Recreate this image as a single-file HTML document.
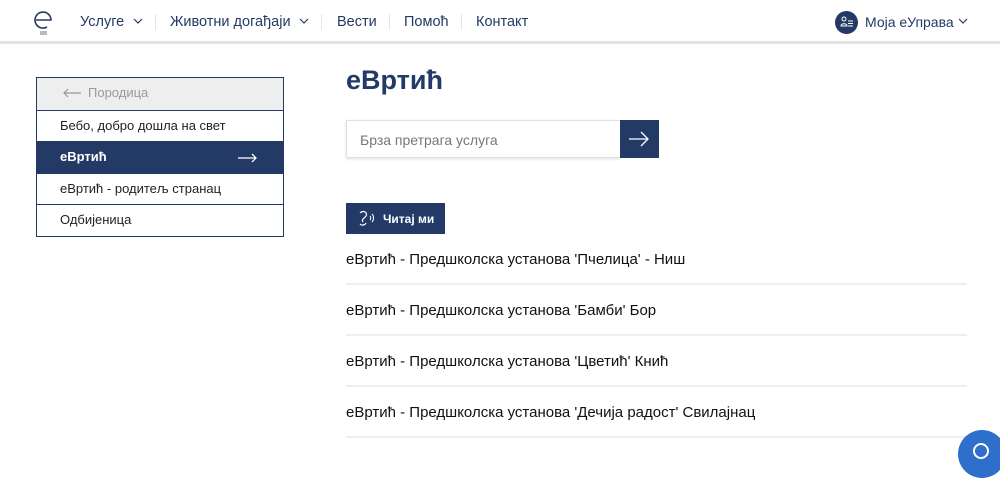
<!DOCTYPE html>
<html><head><meta charset="utf-8"><style>
*{margin:0;padding:0;box-sizing:border-box}
body{width:1000px;height:455px;overflow:hidden;background:#fff;font-family:"Liberation Sans",sans-serif;color:#222;position:relative}
.hdr{position:absolute;left:0;top:0;width:1000px;height:44px;background:#fff;border-bottom:3px solid #e2e2e2}
.nav{position:absolute;top:14px;font-size:14.5px;color:#243a66}
.sep{position:absolute;top:14px;width:1px;height:16px;background:#e6e6e6}
.chev{position:absolute;top:17px}
.side{position:absolute;left:36px;top:77px;width:248px;border:1px solid #243a66}
.side div{height:31.6px;line-height:30px;padding-left:23px;font-size:13px;border-top:1px solid #243a66;position:relative}
.side div:first-child{border-top:none;background:#eee;color:#999}
.side .act{background:#243a66;color:#fff;font-weight:bold}
h1{position:absolute;left:346px;top:65px;font-size:27px;color:#243a66;font-weight:bold}
.search{position:absolute;left:346px;top:120px;width:275px;height:38px;border:1px solid #e0e0e0;box-shadow:0 1px 3px rgba(0,0,0,.12);font-size:14px;color:#777;padding:11px 0 0 13px}
.sbtn{position:absolute;left:620px;top:120px;width:39px;height:38px;background:#243a66}
.read{position:absolute;left:346px;top:203px;width:99px;height:31px;background:#243a66;color:#fff;font-size:12px;font-weight:bold;padding:9px 0 0 37px}
.item{position:absolute;left:346px;width:621px;font-size:15px;color:#111;border-bottom:2px solid #eee;padding-top:3px}
</style></head><body>
<div class="hdr">
<svg style="position:absolute;left:34px;top:11px" width="20" height="26" viewBox="0 0 20 26"><path d="M2 9 H17 A8 8 0 1 0 13 16" fill="none" stroke="#243a66" stroke-width="1.6"/><path d="M6 21h7M6 23h7" stroke="#777" stroke-width="1"/></svg>
<span class="nav" style="left:80px">Услуге</span>
<svg class="chev" style="left:133px" width="10" height="8"><path d="M1 2l4 4 4-4" fill="none" stroke="#243a66" stroke-width="1.2"/></svg>
<div class="sep" style="left:155px"></div>
<span class="nav" style="left:170px">Животни догађаји</span>
<svg class="chev" style="left:299px" width="10" height="8"><path d="M1 2l4 4 4-4" fill="none" stroke="#243a66" stroke-width="1.2"/></svg>
<div class="sep" style="left:321px"></div>
<span class="nav" style="left:337px">Вести</span>
<div class="sep" style="left:389px"></div>
<span class="nav" style="left:404px">Помоћ</span>
<div class="sep" style="left:461px"></div>
<span class="nav" style="left:476px">Контакт</span>
<div style="position:absolute;left:835px;top:11px;width:23px;height:23px;border-radius:50%;background:#243a66"></div>
<svg style="position:absolute;left:840px;top:16px" width="14" height="12"><circle cx="4" cy="3" r="2" fill="none" stroke="#fff"/><path d="M1 10c0-3 6-3 6 0z" fill="none" stroke="#fff"/><path d="M8 5h5M8 7.5h5M8 10h5" stroke="#fff"/></svg>
<span class="nav" style="left:865px;font-size:14px">Моја еУправа</span>
<svg class="chev" style="left:958px" width="10" height="8"><path d="M1 2l4 4 4-4" fill="none" stroke="#243a66" stroke-width="1.2"/></svg>
</div>
<div class="side">
<div><svg style="position:absolute;left:25px;top:10px" width="20" height="10"><path d="M19 5H2M6 1L2 5l4 4" fill="none" stroke="#999" stroke-width="1.2"/></svg><span style="padding-left:28px">Породица</span></div>
<div>Бебо, добро дошла на свет</div>
<div class="act">еВртић<svg style="position:absolute;left:201px;top:11px" width="20" height="10"><path d="M0 5h18M14 1l4 4-4 4" fill="none" stroke="#fff" stroke-width="1.3"/></svg></div>
<div>еВртић - родитељ странац</div>
<div>Одбијеница</div>
</div>
<h1>еВртић</h1>
<div class="search">Брза претрага услуга</div>
<div class="sbtn"><svg style="position:absolute;left:9px;top:11px" width="21" height="16"><path d="M0 8h19M12 1l7 7-7 7" fill="none" stroke="#fff" stroke-width="1.3"/></svg></div>
<div class="read"><svg style="position:absolute;left:11px;top:7px" width="22" height="18"><path d="M3 3c3-3 8-1 6 3-1 2-5 3-3 6M3 14c2 2 5 1 6-1" fill="none" stroke="#fff" stroke-width="1.2"/><path d="M13 6c1 1 1 3 0 4M15 4c2 2 2 6 0 8" fill="none" stroke="#fff" stroke-width="1"/></svg>Читај ми</div>
<div class="item" style="top:248px;height:37px">еВртић - Предшколска установа 'Пчелица' - Ниш</div>
<div class="item" style="top:299px;height:37px">еВртић - Предшколска установа 'Бамби' Бор</div>
<div class="item" style="top:350px;height:37px">еВртић - Предшколска установа 'Цветић' Кнић</div>
<div class="item" style="top:401px;height:37px">еВртић - Предшколска установа 'Дечија радост' Свилајнац</div>
<div style="position:absolute;left:958px;top:430px;width:48px;height:48px;border-radius:50%;background:#2e6fcc"></div>
<div style="position:absolute;left:973px;top:443px;width:16px;height:16px;border-radius:50%;border:2px solid #fff"></div>
</body></html>
